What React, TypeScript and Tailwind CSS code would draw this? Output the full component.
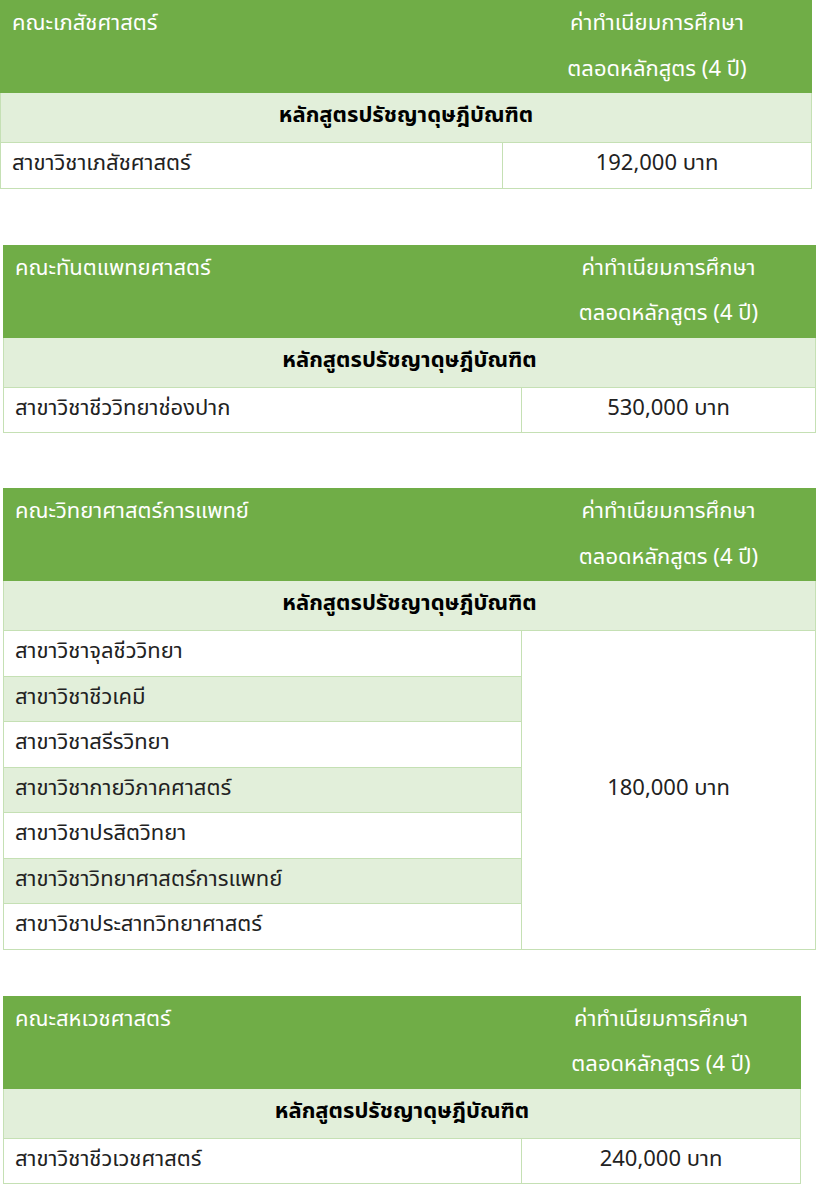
import React from 'react';

type Fee = {
  faculty: string;
  rows: string[];
  fee: string;
  wrap: string;
  leftCol: string;
  headDivider?: boolean;
};

const fees: Fee[] = [
  {
    faculty: 'คณะเภสัชศาสตร์',
    rows: ['สาขาวิชาเภสัชศาสตร์'],
    fee: '192,000 บาท',
    wrap: 'ml-0 w-[812px] mb-[56px]',
    leftCol: 'w-[502px]',
    headDivider: true,
  },
  {
    faculty: 'คณะทันตแพทยศาสตร์',
    rows: ['สาขาวิชาชีววิทยาช่องปาก'],
    fee: '530,000 บาท',
    wrap: 'ml-[3px] w-[813px] mb-[55px]',
    leftCol: 'w-[518px]',
  },
  {
    faculty: 'คณะวิทยาศาสตร์การแพทย์',
    rows: [
      'สาขาวิชาจุลชีววิทยา',
      'สาขาวิชาชีวเคมี',
      'สาขาวิชาสรีรวิทยา',
      'สาขาวิชากายวิภาคศาสตร์',
      'สาขาวิชาปรสิตวิทยา',
      'สาขาวิชาวิทยาศาสตร์การแพทย์',
      'สาขาวิชาประสาทวิทยาศาสตร์',
    ],
    fee: '180,000 บาท',
    wrap: 'ml-[3px] w-[813px] mb-[46px]',
    leftCol: 'w-[518px]',
  },
  {
    faculty: 'คณะสหเวชศาสตร์',
    rows: ['สาขาวิชาชีวเวชศาสตร์'],
    fee: '240,000 บาท',
    wrap: 'ml-[3px] w-[798px]',
    leftCol: 'w-[518px]',
  },
];

function FeeTable({ t }: { t: Fee }) {
  return (
    <table className={`${t.wrap} border-collapse table-fixed text-[22px]`}>
      <colgroup>
        <col className={t.leftCol} />
        <col />
      </colgroup>
      <thead>
        <tr className="bg-[#70ad47] text-white">
          <th className="h-[91px] align-top text-left font-normal pl-[11px] leading-[45.5px] border border-[#70ad47]">
            {t.faculty}
          </th>
          <th
            className={`h-[91px] align-top text-center font-normal leading-[45.5px] border border-[#70ad47] ${
              t.headDivider ? 'border-l-[#8cc063]' : ''
            }`}
          >
            ค่าทำเนียมการศึกษา
            <br />
            ตลอดหลักสูตร (4 ปี)
          </th>
        </tr>
        <tr className="bg-[#e2efda]">
          <th colSpan={2} className="h-[50px] text-center font-bold text-black border border-[#c5e0b4] leading-none pb-[3px]">
            หลักสูตรปรัชญาดุษฎีบัณฑิต
          </th>
        </tr>
      </thead>
      <tbody>
        {t.rows.map((r, i) => (
          <tr key={r} className={i % 2 === 1 ? 'bg-[#e2efda]' : 'bg-white'}>
            <td className="h-[45.5px] pl-[11px] text-[#222] border border-[#c5e0b4] leading-none pb-[2px]">{r}</td>
            {i === 0 && (
              <td rowSpan={t.rows.length} className="bg-white text-center text-[#222] border border-[#c5e0b4] leading-none pb-[2px]">
                {t.fee}
              </td>
            )}
          </tr>
        ))}
      </tbody>
    </table>
  );
}

export default function App() {
  return (
    <div className="w-[816px] bg-white font-['Tahoma','Leelawadee_UI','Noto_Sans_Thai','Noto_Sans',sans-serif]">
      {fees.map((t) => (
        <FeeTable key={t.faculty} t={t} />
      ))}
    </div>
  );
}
